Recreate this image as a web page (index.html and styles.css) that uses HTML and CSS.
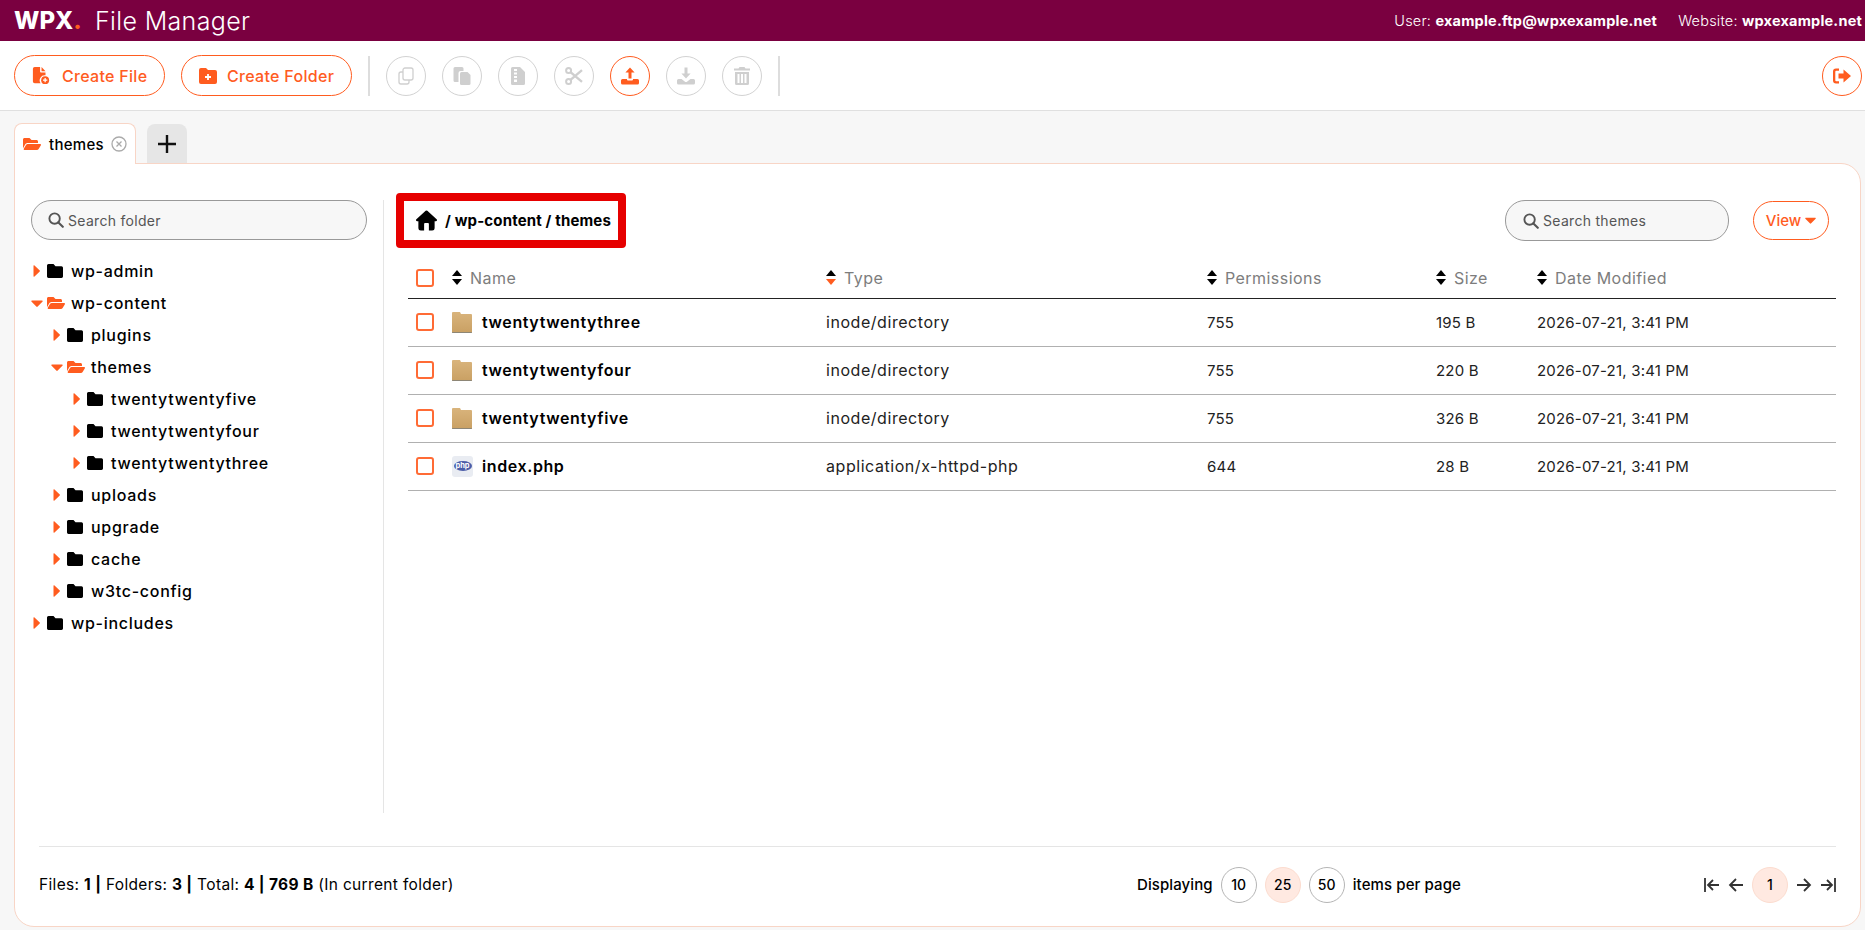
FILE: index.html
```html
<!DOCTYPE html>
<html lang="en">
<head>
    <meta charset="UTF-8">
    <title>WPX File Manager</title>
    <link rel="stylesheet" href="styles.css">
</head>
<body>

    <!-- Shared icons -->
    <svg class="sprite" xmlns="http://www.w3.org/2000/svg">
        <defs>
            <linearGradient id="tan" x1="0" y1="0" x2="0" y2="1"><stop offset="0" stop-color="#d9b47c"/><stop offset="1" stop-color="#c9a063"/></linearGradient>
        </defs>
        <symbol id="i-tan" viewBox="0 0 20 21"><path d="M1 0h7l1 2h10a1 1 0 0 1 1 1v17a1 1 0 0 1-1 1H1a1 1 0 0 1-1-1V1a1 1 0 0 1 1-1z" fill="url(#tan)"/><path d="M0 20h20v.2a.8.8 0 0 1-.8.8H.8a.8.8 0 0 1-.8-.8z" fill="#8d8676"/></symbol>
        <symbol id="i-folder" viewBox="0 64 512 384" preserveAspectRatio="none"><path d="M464 128H272l-64-64H48C21.49 64 0 85.49 0 112v288c0 26.51 21.49 48 48 48h416c26.51 0 48-21.49 48-48V176c0-26.51-21.49-48-48-48z"/></symbol>
        <symbol id="i-folder-open" viewBox="0 0 576 512"><path d="M572.694 292.093L500.27 416.248A63.997 63.997 0 0 1 444.989 448H45.025c-18.523 0-30.064-20.093-20.731-36.093l72.424-124.155A64 64 0 0 1 152 256h399.964c18.523 0 30.064 20.093 20.73 36.093zM152 224h328v-48c0-26.51-21.49-48-48-48H272l-64-64H48C21.49 64 0 85.49 0 112v278.046l69.077-118.418C86.214 242.25 117.989 224 152 224z"/></symbol>
        <symbol id="i-right" viewBox="0 0 7 12"><path d="M.5.8v10.4a.6.6 0 0 0 1 .4l5-4.9a.9.9 0 0 0 0-1.4l-5-4.9a.6.6 0 0 0-1 .4z"/></symbol>
        <symbol id="i-down" viewBox="0 0 12 7"><path d="M.8.5h10.4a.6.6 0 0 1 .4 1l-4.9 5a.9.9 0 0 1-1.4 0l-4.9-5a.6.6 0 0 1 .4-1z"/></symbol>
        <symbol id="i-search" viewBox="0 0 16 16"><circle cx="6.6" cy="6.6" r="5.2" fill="none" stroke="currentColor" stroke-width="1.9"/><path d="M10.4 10.4l4.4 4.4" stroke="currentColor" stroke-width="2.1" stroke-linecap="round"/></symbol>
    </svg>

    <div class="topbar">
        <div class="brand">
            <span class="logo">WPX<i>.</i></span>
            <span class="app-name">File Manager</span>
        </div>
        <div class="account">
            <span>User: <b>example.ftp@wpxexample.net</b></span>
            <span>Website: <b>wpxexample.net</b></span>
        </div>
    </div>

    <div class="toolbar">
        <button class="pill-btn btn-file">
            <svg class="btn-icon" viewBox="0 0 18 20"><path d="M2 0h6v5a1 1 0 0 0 1 1h5v3.2A5.6 5.6 0 0 0 8.6 18H2a2 2 0 0 1-2-2V2a2 2 0 0 1 2-2zM9.6 0L14 4.6H9.600z"/><circle cx="13.6" cy="14.6" r="4.4"/><path d="M13.6 12.2v4.8M11.2 14.6H16" stroke="#fff" stroke-width="1.4"/></svg>
            Create File
        </button>
        <button class="pill-btn btn-folder">
            <svg class="btn-icon" viewBox="0 0 18 16"><path d="M2 0h5l2 2h7a2 2 0 0 1 2 2v10a2 2 0 0 1-2 2H2a2 2 0 0 1-2-2V2a2 2 0 0 1 2-2z"/><path d="M9 6v6M6 9h6" stroke="#fff" stroke-width="1.8"/></svg>
            Create Folder
        </button>
        <span class="tool-sep"></span>
        <button class="round-btn">
            <svg class="outline" viewBox="0 0 16 18" stroke="currentColor" stroke-width="1.3"><rect x="5" y="1" width="10" height="12" rx="2"/><path d="M5 5H3a2 2 0 0 0-2 2v8a2 2 0 0 0 2 2h6a2 2 0 0 0 2-2v-2"/></svg>
        </button>
        <button class="round-btn">
            <svg viewBox="0 0 17 18"><path d="M1.5 0h7A1.5 1.5 0 0 1 10 1.5V4H7a2 2 0 0 0-2 2v9H1.5A1.5 1.5 0 0 1 0 13.5v-12A1.5 1.5 0 0 1 1.5 0z"/><path d="M8 5h6l3 3v8.5a1.5 1.5 0 0 1-1.5 1.5H8a1.5 1.5 0 0 1-1.5-1.5v-10A1.5 1.5 0 0 1 8 5z"/></svg>
        </button>
        <button class="round-btn">
            <svg viewBox="0 0 14 18"><path fill-rule="evenodd" d="M1.5 0H9l5 5v11.5a1.5 1.5 0 0 1-1.5 1.5h-11A1.5 1.5 0 0 1 0 16.5v-15A1.5 1.5 0 0 1 1.5 0zM3 2v2h3V2zM3 5.500v2h3v-2zM3 9v2h3V9zM3 12.500V15h3v-2.500z"/></svg>
        </button>
        <button class="round-btn">
            <svg class="outline" viewBox="0 0 18 18" stroke="currentColor"><circle cx="3.6" cy="3.6" r="2.5" stroke-width="2"/><circle cx="3.6" cy="14.4" r="2.5" stroke-width="2"/><path d="M5.500 5.200L17 14.800M5.500 12.800L17 3.200" stroke-width="2.4"/></svg>
        </button>
        <button class="round-btn active">
            <svg viewBox="0 0 18 17"><path d="M9 0l4.600 5H10.500v6h-3V5H4.400z"/><path d="M1.500 11.500H6v.5a1 1 0 0 0 1 1h4a1 1 0 0 0 1-1v-.5h4.500A1.500 1.500 0 0 1 18 13v2.500a1.500 1.500 0 0 1-1.500 1.500h-15A1.500 1.500 0 0 1 0 15.500V13a1.500 1.500 0 0 1 1.500-1.500z"/></svg>
        </button>
        <button class="round-btn">
            <svg viewBox="0 0 18 17"><path d="M7.500 0h3v6h3.100L9 11 4.400 6h3.100z"/><path d="M1.500 11.500H4.500L7.700 14a2 2 0 0 0 2.600 0l3.200-2.500h3A1.500 1.500 0 0 1 18 13v2.500a1.500 1.500 0 0 1-1.500 1.500h-15A1.500 1.500 0 0 1 0 15.500V13a1.500 1.500 0 0 1 1.500-1.500z"/></svg>
        </button>
        <button class="round-btn">
            <svg viewBox="0 0 16 18"><path fill-rule="evenodd" d="M5.500 0h5l1 1.500H16V3.500H0V1.500h4.500zM1 5h14v11.500a1.500 1.500 0 0 1-1.500 1.500h-11A1.500 1.500 0 0 1 1 16.500zM3.500 7v9h2V7zM7 7v9h2V7zM10.500 7v9h2V7z"/></svg>
        </button>
        <span class="tool-sep"></span>
        <button class="round-btn active logout">
            <svg viewBox="0 0 18 15"><path d="M0 3a3 3 0 0 1 3-3h3v2.300H3.200a.9.9 0 0 0-.9.9v8.600a.9.9 0 0 0 .9.9H6V15H3a3 3 0 0 1-3-3z"/><path d="M10.500 1L18 7.500 10.500 14v-4H5.500V5h5z"/></svg>
        </button>
    </div>

    <div class="workspace">
        <div class="tabs">
            <div class="tab">
                <svg class="tab-folder"><use href="#i-folder-open"/></svg>
                <span>themes</span>
                <svg class="tab-close" viewBox="0 0 16 16" fill="none" stroke="#aaa"><circle cx="8" cy="8" r="7" stroke-width="1.3"/><path d="M5.500 5.500l5 5M10.500 5.500l-5 5" stroke-width="1.3"/></svg>
            </div>
            <div class="tab-add">
                <svg viewBox="0 0 18 18"><path d="M9 0v18M0 9h18" stroke="#111" stroke-width="2.4"/></svg>
            </div>
        </div>

        <div class="panel">
            <div class="panel-main">
                <div class="sidebar">
                    <div class="search">
                        <svg class="search-icon"><use href="#i-search"/></svg>
                        <span>Search folder</span>
                    </div>
                    <ul class="tree">
                        <li class="tree-row"><svg class="arrow"><use href="#i-right"/></svg><svg class="tree-folder"><use href="#i-folder"/></svg>wp-admin</li>
                        <li class="tree-row open"><svg class="arrow-down"><use href="#i-down"/></svg><svg class="tree-folder"><use href="#i-folder-open"/></svg>wp-content</li>
                        <li>
                            <ul class="tree sub">
                                <li class="tree-row"><svg class="arrow"><use href="#i-right"/></svg><svg class="tree-folder"><use href="#i-folder"/></svg>plugins</li>
                                <li class="tree-row open"><svg class="arrow-down"><use href="#i-down"/></svg><svg class="tree-folder"><use href="#i-folder-open"/></svg>themes</li>
                                <li>
                                    <ul class="tree sub">
                                        <li class="tree-row"><svg class="arrow"><use href="#i-right"/></svg><svg class="tree-folder"><use href="#i-folder"/></svg>twentytwentyfive</li>
                                        <li class="tree-row"><svg class="arrow"><use href="#i-right"/></svg><svg class="tree-folder"><use href="#i-folder"/></svg>twentytwentyfour</li>
                                        <li class="tree-row"><svg class="arrow"><use href="#i-right"/></svg><svg class="tree-folder"><use href="#i-folder"/></svg>twentytwentythree</li>
                                    </ul>
                                </li>
                                <li class="tree-row"><svg class="arrow"><use href="#i-right"/></svg><svg class="tree-folder"><use href="#i-folder"/></svg>uploads</li>
                                <li class="tree-row"><svg class="arrow"><use href="#i-right"/></svg><svg class="tree-folder"><use href="#i-folder"/></svg>upgrade</li>
                                <li class="tree-row"><svg class="arrow"><use href="#i-right"/></svg><svg class="tree-folder"><use href="#i-folder"/></svg>cache</li>
                                <li class="tree-row"><svg class="arrow"><use href="#i-right"/></svg><svg class="tree-folder"><use href="#i-folder"/></svg>w3tc-config</li>
                            </ul>
                        </li>
                        <li class="tree-row"><svg class="arrow"><use href="#i-right"/></svg><svg class="tree-folder"><use href="#i-folder"/></svg>wp-includes</li>
                    </ul>
                </div>

                <div class="content">
                    <div class="content-top">
                        <div class="breadcrumb">
                            <svg class="home" viewBox="0 0 22 21"><path fill-rule="evenodd" d="M11 0a1.300 1.300 0 0 1 .9.4l9.700 8.900a1.200 1.200 0 0 1-.8 2.100H19.500v7.100a2.500 2.500 0 0 1-2.500 2.500H5a2.500 2.500 0 0 1-2.500-2.500v-7.100H1.200a1.200 1.200 0 0 1-.8-2.100L10.100.4A1.300 1.300 0 0 1 11 0zM9.500 13a1 1 0 0 0-1 1v7h5v-7a1 1 0 0 0-1-1z"/></svg>
                            <span>/ wp-content / themes</span>
                        </div>
                        <div class="search search-files">
                            <svg class="search-icon"><use href="#i-search"/></svg>
                            <span>Search themes</span>
                        </div>
                        <button class="view-btn">View <svg><use href="#i-down"/></svg></button>
                    </div>

                    <table class="files">
                        <colgroup>
                            <col class="col-check"><col class="col-name"><col class="col-type">
                            <col class="col-perm"><col class="col-size"><col class="col-date">
                        </colgroup>
                        <thead>
                            <tr>
                                <th><span class="check"></span></th>
                                <th><span class="sort"><i class="up"></i><i class="dn"></i></span>Name</th>
                                <th><span class="sort"><i class="up"></i><i class="dn on"></i></span>Type</th>
                                <th><span class="sort"><i class="up"></i><i class="dn"></i></span>Permissions</th>
                                <th><span class="sort"><i class="up"></i><i class="dn"></i></span>Size</th>
                                <th><span class="sort"><i class="up"></i><i class="dn"></i></span>Date Modified</th>
                            </tr>
                        </thead>
                        <tbody>
                            <tr>
                                <td><span class="check"></span></td>
                                <td><span class="name"><svg class="file-icon"><use href="#i-tan"/></svg>twentytwentythree</span></td>
                                <td class="type">inode/directory</td><td>755</td><td>195 B</td><td>2026-07-21, 3:41 PM</td>
                            </tr>
                            <tr>
                                <td><span class="check"></span></td>
                                <td><span class="name"><svg class="file-icon"><use href="#i-tan"/></svg>twentytwentyfour</span></td>
                                <td class="type">inode/directory</td><td>755</td><td>220 B</td><td>2026-07-21, 3:41 PM</td>
                            </tr>
                            <tr>
                                <td><span class="check"></span></td>
                                <td><span class="name"><svg class="file-icon"><use href="#i-tan"/></svg>twentytwentyfive</span></td>
                                <td class="type">inode/directory</td><td>755</td><td>326 B</td><td>2026-07-21, 3:41 PM</td>
                            </tr>
                            <tr>
                                <td><span class="check"></span></td>
                                <td><span class="name"><span class="php-icon"><span>php</span></span>index.php</span></td>
                                <td class="type">application/x-httpd-php</td><td>644</td><td>28 B</td><td>2026-07-21, 3:41 PM</td>
                            </tr>
                        </tbody>
                    </table>
                </div>
            </div>

            <div class="panel-foot">
                <div class="stats">Files: <b>1 |</b> Folders: <b>3 |</b> Total: <b>4 | 769 B</b> (In current folder)</div>
                <div class="per-page">
                    <span>Displaying</span>
                    <span class="page-num">10</span>
                    <span class="page-num current">25</span>
                    <span class="page-num">50</span>
                    <span>items per page</span>
                </div>
                <div class="pager">
                    <svg viewBox="0 0 16 14"><path d="M1 0v14M15 7H4M9 2L4 7l5 5"/></svg>
                    <svg viewBox="0 0 16 14"><path d="M15 7H2M8 1L2 7l6 6"/></svg>
                    <span class="page-num current">1</span>
                    <svg viewBox="0 0 16 14"><path d="M1 7h13M8 1l6 6-6 6"/></svg>
                    <svg viewBox="0 0 16 14"><path d="M15 0v14M1 7h11M7 2l5 5-5 5"/></svg>
                </div>
            </div>
        </div>
    </div>

</body>
</html>
```

FILE: styles.css
```css
* {
    box-sizing: border-box;
}

body {
    font-family: Inter, "Noto Sans", sans-serif;
    font-size: 15px;
    color: #000;
    background-color: #f7f7f7;
    margin: 0;
    height: 930px;
    overflow: hidden;
    display: flex;
    flex-direction: column;
}

.sprite {
    position: absolute;
    width: 0;
    height: 0;
}

ul {
    list-style: none;
    margin: 0;
    padding: 0;
}

/* Top bar */
.topbar {
    height: 41px;
    flex: none;
    background-color: #7a0040;
    color: #fff;
    display: flex;
    justify-content: space-between;
    align-items: center;
    padding: 0 3px 0 14px;
}

.brand {
    display: flex;
    align-items: center;
    gap: 17px;
}

.logo {
    font-size: 24px;
    font-weight: 800;
    width: 64px;
}

.logo i {
    color: #ff5c1f;
    font-style: normal;
}

.app-name {
    font-size: 25px;
    font-weight: 300;
    letter-spacing: 0.35px;
}

.account {
    display: flex;
    gap: 21px;
    font-size: 14.5px;
    font-weight: 300;
    letter-spacing: 0.2px;
}

.account b {
    font-weight: 700;
}

/* Toolbar */
.toolbar {
    height: 70px;
    flex: none;
    background-color: #fff;
    border-bottom: 1px solid #e0e0e0;
    display: flex;
    align-items: center;
    padding: 0 3px 0 14px;
    gap: 16px;
}

.pill-btn {
    height: 41px;
    padding: 0 0 0 17px;
    border: 1.5px solid #ff5c1f;
    border-radius: 21px;
    background-color: #fff;
    color: #ff5c1f;
    font-family: inherit;
    font-size: 16px;
    font-weight: 500;
    display: flex;
    align-items: center;
    gap: 12px;
    letter-spacing: 0.3px;
}

.btn-file {
    width: 151px;
}

.btn-folder {
    width: 171px;
    gap: 10px;
}

.btn-icon {
    width: 18px;
    height: 18px;
    fill: #ff5c1f;
}

.tool-sep {
    width: 2px;
    height: 40px;
    background-color: #ddd;
}

.round-btn {
    width: 40px;
    height: 40px;
    flex: none;
    padding: 0;
    border: 1.5px solid #d2d2d2;
    border-radius: 50%;
    background-color: #fff;
    color: #cfcfcf;
    display: flex;
    align-items: center;
    justify-content: center;
}

.round-btn svg {
    width: 18px;
    height: 18px;
    fill: currentColor;
}

.round-btn svg.outline {
    fill: none;
}

.round-btn.active {
    border-color: #ff5c1f;
    color: #ff5c1f;
}

.logout {
    margin-left: auto;
}

/* Tabs */
.workspace {
    flex: 1;
    display: flex;
    flex-direction: column;
    padding: 12px 4px 3px 14px;
    min-height: 0;
}

.tabs {
    display: flex;
    gap: 11px;
    height: 41px;
    flex: none;
    margin-bottom: -1px;
    position: relative;
    align-items: flex-end;
}

.tab {
    width: 122px;
    height: 41px;
    background-color: #fff;
    border: 1px solid #f8d5c6;
    border-bottom: none;
    border-radius: 8px 8px 0 0;
    display: flex;
    align-items: center;
    padding: 0 0 0 8px;
    font-size: 15px;
    font-weight: 500;
    letter-spacing: 0.3px;
}

.tab-folder {
    width: 18px;
    height: 16px;
    fill: #ff5c1f;
    margin-right: 8px;
}

.tab-close {
    width: 16px;
    height: 16px;
    margin-left: 7px;
}

.tab-add {
    width: 40px;
    height: 39px;
    margin-bottom: 1px;
    background-color: #e6e6e6;
    border-radius: 8px 8px 0 0;
    display: flex;
    align-items: center;
    justify-content: center;
}

.tab-add svg {
    width: 18px;
    height: 18px;
}

/* Panel */
.panel {
    flex: 1;
    min-height: 0;
    background-color: #fff;
    border: 1px solid #f8d5c6;
    border-radius: 0 20px 20px 20px;
    display: flex;
    flex-direction: column;
    padding: 29px 24px 0 0;
}

.panel-main {
    height: 620px;
    flex: none;
    display: flex;
    margin-bottom: 33px;
}

.sidebar {
    width: 369px;
    flex: none;
    margin-top: 7px;
    padding: 0 16px;
    border-right: 1px solid #e5e5e5;
}

.search {
    height: 40px;
    border: 1px solid #999;
    border-radius: 20px;
    background-color: #f7f7f7;
    display: flex;
    align-items: center;
    padding-left: 16px;
    gap: 4px;
    font-size: 14px;
    letter-spacing: 0.3px;
    color: #555;
}

.search-icon {
    width: 16px;
    height: 16px;
    color: #555;
}

.sidebar .search {
    margin-bottom: 15px;
}

/* Folder tree */
.tree-row {
    height: 32px;
    display: flex;
    align-items: center;
    font-size: 16px;
    font-weight: 500;
    letter-spacing: 0.72px;
}

.tree.sub {
    padding-left: 20px;
}

.arrow {
    width: 7px;
    height: 12px;
    fill: #ff5c1f;
    margin: 0 7px 0 2px;
    flex: none;
}

.arrow-down {
    width: 12px;
    height: 7px;
    fill: #ff5c1f;
    margin-right: 4px;
    flex: none;
}

.tree-folder {
    width: 16px;
    height: 14px;
    margin-right: 8px;
    flex: none;
}

.open .tree-folder {
    width: 18px;
    height: 16px;
    margin-right: 6px;
    fill: #ff5c1f;
}

/* Files */
.content {
    flex: 1;
    min-width: 0;
    padding-left: 12px;
}

.content-top {
    display: flex;
    align-items: center;
}

.breadcrumb {
    width: 230px;
    height: 55px;
    border: 8px solid #e60000;
    border-radius: 4px;
    display: flex;
    align-items: center;
    padding-left: 12px;
    gap: 8px;
    font-size: 15px;
    font-weight: 700;
    letter-spacing: 0.15px;
    white-space: nowrap;
}

.home {
    width: 21px;
    height: 21px;
    flex: none;
}

.search-files {
    width: 224px;
    height: 41px;
    margin-left: auto;
    padding-left: 17px;
}

.view-btn {
    width: 76px;
    height: 39px;
    margin: 0 7px 0 24px;
    padding: 0;
    border: 1.5px solid #ff5c1f;
    border-radius: 20px;
    background-color: #fff;
    color: #ff5c1f;
    font-family: inherit;
    font-size: 15px;
    font-weight: 500;
    display: flex;
    align-items: center;
    justify-content: center;
    gap: 4px;
}

.view-btn svg {
    width: 11px;
    height: 7px;
    fill: #ff5c1f;
}

.files {
    width: 1428px;
    margin: 10px 0 0 12px;
    border-collapse: collapse;
    table-layout: fixed;
}

.col-check { width: 44px; }
.col-name { width: 374px; }
.col-type { width: 381px; }
.col-perm { width: 229px; }
.col-size { width: 101px; }
.col-date { width: 299px; }

.files th {
    height: 40px;
    padding: 0;
    text-align: left;
    font-weight: 400;
    font-size: 16px;
    letter-spacing: 0.45px;
    color: #7d7d7d;
    border-bottom: 1px solid #222;
    white-space: nowrap;
}

.files td {
    height: 48px;
    padding: 0;
    font-size: 15px;
    letter-spacing: 0.2px;
    color: #222;
    border-bottom: 1px solid #b0b0b0;
    white-space: nowrap;
}

.files td.type {
    font-size: 16px;
    letter-spacing: 0.55px;
}

.name {
    display: flex;
    align-items: center;
    font-size: 16px;
    font-weight: 600;
    color: #000;
    letter-spacing: 0.6px;
}

.check {
    display: block;
    width: 18px;
    height: 18px;
    margin-left: 8px;
    border: 2px solid #ff6b35;
    border-radius: 3px;
    background-color: #fff;
}

.sort {
    display: inline-block;
    width: 10px;
    height: 16px;
    margin-right: 8px;
    vertical-align: -2px;
}

.sort i {
    display: block;
    width: 0;
    height: 0;
    border-left: 5px solid transparent;
    border-right: 5px solid transparent;
}

.sort .up {
    border-bottom: 6px solid #000;
    margin-bottom: 3px;
}

.sort .dn {
    border-top: 6px solid #000;
}

.sort .dn.on {
    border-top-color: #ff5c1f;
}

.file-icon {
    width: 20px;
    height: 21px;
    margin-right: 10px;
}

.php-icon {
    display: flex;
    width: 21px;
    height: 21px;
    margin-right: 9px;
    border-radius: 3px;
    background-color: #e9ecf2;
    align-items: center;
    justify-content: center;
}

.php-icon span {
    display: block;
    width: 18px;
    height: 10px;
    border-radius: 50%;
    background-color: #4b5da8;
    color: #fff;
    font-size: 7.5px;
    line-height: 9px;
    font-weight: 700;
    text-align: center;
    letter-spacing: 0;
}

/* Footer */
.panel-foot {
    flex: 1;
    margin-left: 24px;
    border-top: 1px solid #e5e5e5;
    display: flex;
    align-items: center;
    padding-bottom: 4px;
}

.stats {
    font-size: 15.5px;
    letter-spacing: 0.34px;
    margin-bottom: 1px;
}

.stats b {
    font-weight: 700;
}

.per-page {
    margin-left: auto;
    margin-right: 243px;
    display: flex;
    align-items: center;
    gap: 8px;
    font-size: 15px;
    font-weight: 500;
    letter-spacing: 0.1px;
}

.page-num {
    width: 36px;
    height: 36px;
    border: 1px solid #b5b5b5;
    border-radius: 50%;
    display: flex;
    align-items: center;
    justify-content: center;
    font-size: 14px;
    font-weight: 500;
}

.page-num.current {
    background-color: #ffe9e1;
    border-color: #fcdccf;
}

.pager {
    display: flex;
    align-items: center;
    gap: 8px;
}

.pager svg {
    width: 16px;
    height: 14px;
    fill: none;
    stroke: #333;
    stroke-width: 1.8;
}
```
